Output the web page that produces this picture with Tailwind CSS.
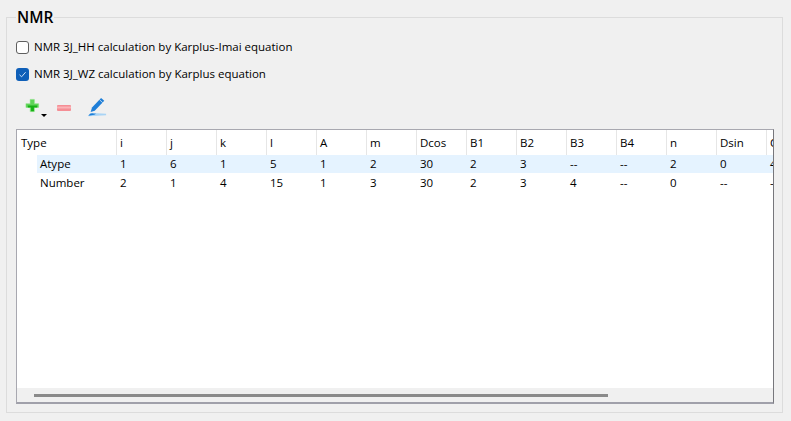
<!DOCTYPE html>
<html lang="en">
<head>
  <meta charset="UTF-8" />
  <title>NMR</title>
  <script src="https://cdn.jsdelivr.net/npm/@tailwindcss/browser@4"></script>
</head>
<body class="w-[791px] h-[421px] overflow-hidden bg-[#f0f0f0] font-['Open_Sans','Noto_Sans',sans-serif] text-[11.5px] text-black">
  <div class="pt-[8px] pl-[6px] pr-[8px]">
    <fieldset class="h-[405px] border border-[#dcdcdc] pl-[9px] pr-[8px] m-0 min-w-0">
      <legend class="ml-[0px] px-[1px] h-[18px] leading-[18px] text-[15.5px] font-semibold text-black">NMR</legend>

      <!-- Options -->
      <label class="flex items-center h-[18px] mt-[12px] gap-[5px]">
        <span class="w-[13px] h-[13px] rounded-[3px] border border-[#5f5f5f] bg-white"></span>
        <span>NMR 3J_HH calculation by Karplus-Imai equation</span>
      </label>
      <label class="flex items-center h-[18px] mt-[9px] gap-[5px]">
        <span class="w-[13px] h-[13px] rounded-[3px] bg-[#0f5fb8] flex items-center justify-center">
          <svg width="9" height="9" viewBox="0 0 9 9" fill="none" stroke="#cfe3f7" stroke-width="1"><path d="M1.500 4.800 L3.600 6.800 L7.600 2.200"/></svg>
        </span>
        <span>NMR 3J_WZ calculation by Karplus equation</span>
      </label>

      <!-- Toolbar -->
      <div class="flex items-center h-[24px] mt-[14px] ml-[9px]">
        <div class="relative w-[32px] h-[24px]">
          <svg class="absolute left-0 top-[1px]" width="15" height="15" viewBox="0 0 16 16"><path d="M5.500 1.500h4.500v4.500h4.500v4h-4.500v4.500h-4.500v-4.500h-4.500v-4h4.500z" fill="#5fd458" stroke="#7fe078" stroke-width="0.5"/><path d="M6.500 8h3v6h-3zM3 8h10v2H3z" fill="#17b016"/></svg>
          <span class="absolute left-[16px] top-[17px] w-0 h-0 border-x-[3px] border-x-transparent border-t-[3px] border-t-black"></span>
        </div>
        <svg width="14" height="6" viewBox="0 0 14 6" class="mb-[3px]"><rect width="14" height="6" rx="1" fill="#f58e95"/><rect y="1.500" width="14" height="2" fill="#fbb4b8"/></svg>
        <svg width="20" height="21" viewBox="0 0 22 22" class="ml-[16px] mb-[3px]"><path d="M15.500 0.500 L19 3.500 L8.500 14.500 L4 16 L5.500 11 Z" fill="#1f7fd8"/><path d="M13.800 2.500 L17.300 5.700" stroke="#f0f0f0" stroke-width="0.8"/><path d="M1.500 19.500 Q3.500 16.500 6.500 17 L21 18 L21 19.500 L1.500 20.500 Z" fill="#a9d4f5"/><path d="M1.500 20 Q3.500 17 6.500 17.500 L10 17.800 L8 19 Z" fill="#1f7fd8"/></svg>
      </div>

      <!-- Table -->
      <div class="mt-[8px] w-[758px] h-[275px] border border-[#a8a8b0] border-r-[#77777c] border-b-[#a0a0aa] border-b-2 bg-white flex flex-col">
        <div class="h-[258px] overflow-hidden">
          <div class="grid grid-cols-[100px_repeat(14,50px)] w-[800px] h-[25px] leading-[25px]">
            <div class="pl-[4px] border-r border-[#e6e6e6]">Type</div>
            <div class="pl-[3px] border-r border-[#e6e6e6]">i</div>
            <div class="pl-[3px] border-r border-[#e6e6e6]">j</div>
            <div class="pl-[3px] border-r border-[#e6e6e6]">k</div>
            <div class="pl-[3px] border-r border-[#e6e6e6]">l</div>
            <div class="pl-[3px] border-r border-[#e6e6e6]">A</div>
            <div class="pl-[3px] border-r border-[#e6e6e6]">m</div>
            <div class="pl-[3px] border-r border-[#e6e6e6]">Dcos</div>
            <div class="pl-[3px] border-r border-[#e6e6e6]">B1</div>
            <div class="pl-[3px] border-r border-[#e6e6e6]">B2</div>
            <div class="pl-[3px] border-r border-[#e6e6e6]">B3</div>
            <div class="pl-[3px] border-r border-[#e6e6e6]">B4</div>
            <div class="pl-[3px] border-r border-[#e6e6e6]">n</div>
            <div class="pl-[3px] border-r border-[#e6e6e6]">Dsin</div>
            <div class="pl-[3px]">C</div>
          </div>
          <div class="grid grid-cols-[100px_repeat(14,50px)] w-[800px] h-[18px] leading-[18px]">
            <div class="ml-[20px] pl-[3px] bg-[#e5f3ff]">Atype</div>
            <div class="pl-[3px] bg-[#e5f3ff]">1</div>
            <div class="pl-[3px] bg-[#e5f3ff]">6</div>
            <div class="pl-[3px] bg-[#e5f3ff]">1</div>
            <div class="pl-[3px] bg-[#e5f3ff]">5</div>
            <div class="pl-[3px] bg-[#e5f3ff]">1</div>
            <div class="pl-[3px] bg-[#e5f3ff]">2</div>
            <div class="pl-[3px] bg-[#e5f3ff]">30</div>
            <div class="pl-[3px] bg-[#e5f3ff]">2</div>
            <div class="pl-[3px] bg-[#e5f3ff]">3</div>
            <div class="pl-[3px] bg-[#e5f3ff]">--</div>
            <div class="pl-[3px] bg-[#e5f3ff]">--</div>
            <div class="pl-[3px] bg-[#e5f3ff]">2</div>
            <div class="pl-[3px] bg-[#e5f3ff]">0</div>
            <div class="pl-[3px] bg-[#e5f3ff]">4</div>
          </div>
          <div class="grid grid-cols-[100px_repeat(14,50px)] w-[800px] h-[19px] leading-[19px]">
            <div class="ml-[20px] pl-[3px]">Number</div>
            <div class="pl-[3px]">2</div>
            <div class="pl-[3px]">1</div>
            <div class="pl-[3px]">4</div>
            <div class="pl-[3px]">15</div>
            <div class="pl-[3px]">1</div>
            <div class="pl-[3px]">3</div>
            <div class="pl-[3px]">30</div>
            <div class="pl-[3px]">2</div>
            <div class="pl-[3px]">3</div>
            <div class="pl-[3px]">4</div>
            <div class="pl-[3px]">--</div>
            <div class="pl-[3px]">0</div>
            <div class="pl-[3px]">--</div>
            <div class="pl-[3px]">-</div>
          </div>
        </div>
        <!-- Scrollbar -->
        <div class="flex-1 bg-[#f0f0f0] pl-[17px] pt-[6px]">
          <div class="w-[574px] h-[3px] bg-[#8a8a8a]"></div>
        </div>
      </div>
    </fieldset>
  </div>
</body>
</html>
